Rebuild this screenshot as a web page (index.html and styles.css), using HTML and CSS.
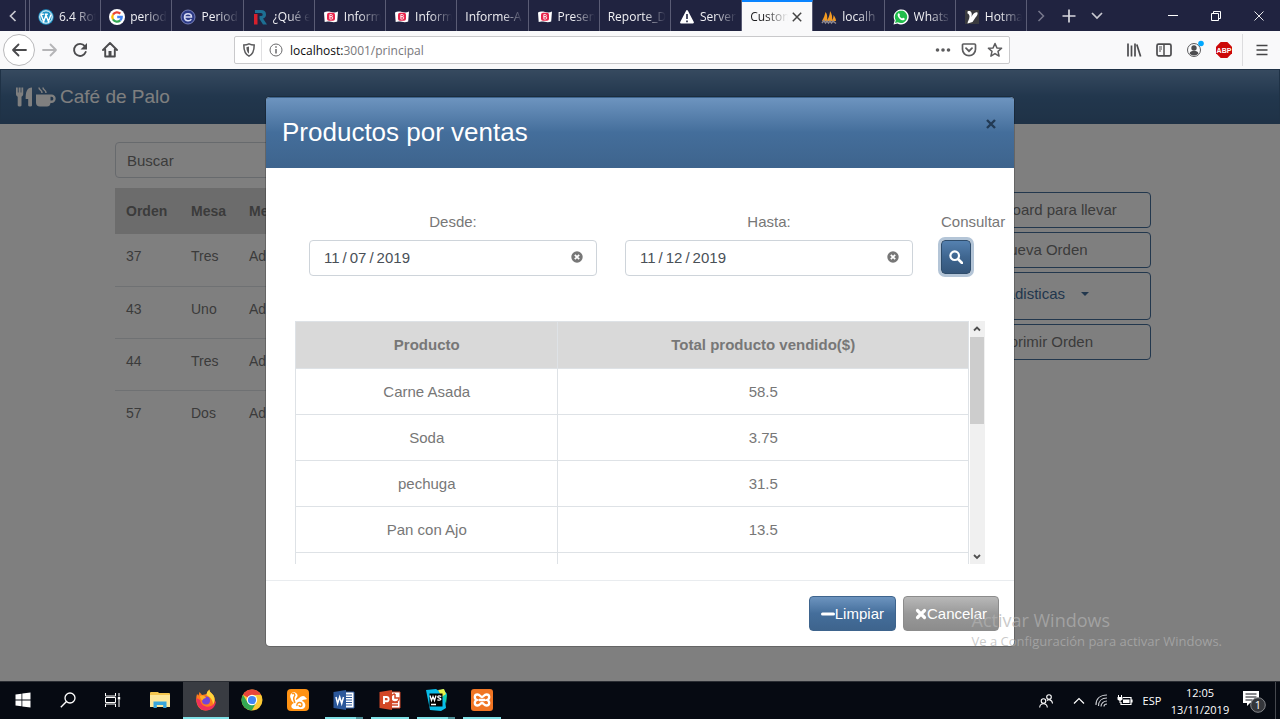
FILE: index.html
```html
<!DOCTYPE html>
<html lang="es">
<head>
<meta charset="utf-8">
<title>Customers</title>
<link rel="stylesheet" href="styles.css">
</head>
<body>
<svg class="defs" aria-hidden="true">
  <symbol id="bold-b" viewBox="0 0 16 16"><path d="M1 3.500c2-1.200 4-1.200 7-.5s5 .5 7-.6l-.8 10c-2 1-4 1-6.500.4s-4.500-.5-6 .2z" fill="#fff"/><rect x="4" y="3.800" width="8" height="8" rx="2" fill="#e8254b"/><path d="M6.800 5.500h1.500a1.100 1.100 0 010 2.200H6.800h1.700a1.200 1.200 0 010 2.400H6.800z" fill="none" stroke="#fff" stroke-width=".8"/></symbol>
  <symbol id="clear" viewBox="0 0 12 12"><circle cx="6" cy="6" r="5.700" fill="#777"/><path d="M3.800 3.800l4.400 4.400M8.200 3.800L3.800 8.200" stroke="#fff" stroke-width="1.700"/></symbol>
</svg>

<header class="tabbar">
  <button class="tab-scroll" aria-label="Anterior"><svg width="10" height="12" viewBox="0 0 10 12"><path d="M7.500 1L2.500 6l5 5" fill="none" stroke="#c8c8d0" stroke-width="1.700"/></svg></button>
  <nav class="tabs">
    <button class="tab"><svg class="fav" viewBox="0 0 16 16"><circle cx="8" cy="8" r="7.700" fill="#2196c9"/><circle cx="8" cy="8" r="6.200" fill="none" stroke="#fff" stroke-width="1"/><path d="M3 5.500l2.700 7L8 6l2.400 6.500L13 5.500M2.800 5.300h3M6.800 5.300h3" fill="none" stroke="#fff" stroke-width="1.400"/></svg><span class="tab-title">6.4 Rot</span></button>
    <button class="tab"><svg class="fav" viewBox="0 0 16 16"><circle cx="8" cy="8" r="8" fill="#fff"/><g fill="none" stroke-width="2.300"><path d="M11.300 4.600A4.700 4.700 0 004 5.600" stroke="#ea4335"/><path d="M4 5.600a4.700 4.700 0 000 4.800" stroke="#fbbc05"/><path d="M4 10.400a4.700 4.700 0 007.200 1" stroke="#34a853"/><path d="M11.200 11.400A4.500 4.500 0 0012.700 8H8.200" stroke="#4285f4"/></g></svg><span class="tab-title">period</span></button>
    <button class="tab"><svg class="fav" viewBox="0 0 16 16"><circle cx="8" cy="8" r="7" fill="#2c3a86" stroke="#8d96cc" stroke-width=".8"/><path d="M4.500 8h7c0-4.500-7-4.500-7 0s5.500 4.500 6.800 2.200" fill="none" stroke="#d6daf3" stroke-width="1.500"/></svg><span class="tab-title">Period</span></button>
    <button class="tab"><svg class="fav" viewBox="0 0 16 16"><path d="M3 1h6q5 0 5 4.500 0 3-3 4l4 6h-4L7.500 10V7H9q1.700 0 1.700-1.500T9 4H3z" fill="#1d6f93"/><path d="M2 5h3.500v10.500H2z" fill="#d6202c"/></svg><span class="tab-title">¿Qué e</span></button>
    <button class="tab"><svg class="fav"><use href="#bold-b"/></svg><span class="tab-title">Inform</span></button>
    <button class="tab"><svg class="fav"><use href="#bold-b"/></svg><span class="tab-title">Inform</span></button>
    <button class="tab"><span class="tab-title">Informe-A</span></button>
    <button class="tab"><svg class="fav"><use href="#bold-b"/></svg><span class="tab-title">Presen</span></button>
    <button class="tab"><span class="tab-title">Reporte_D</span></button>
    <button class="tab"><svg class="fav" viewBox="0 0 16 16"><path d="M8 2l6 11.500H2z" fill="#fff" stroke="#fff" stroke-width="1.800" stroke-linejoin="round"/><path d="M8 5v5M8 11.500v1.700" stroke="#202340" stroke-width="1.600"/></svg><span class="tab-title">Server</span></button>
    <button class="tab active"><span class="tab-title">Custon</span><svg class="tab-close" viewBox="0 0 10 10"><path d="M.8.800l8.400 8.400M9.200.800L.8 9.200" stroke="#444" stroke-width="1.500"/></svg></button>
    <button class="tab"><svg class="fav" viewBox="0 0 16 16"><path d="M1 12C3 9 4 5 4.500 3c2 2 2 6 1.500 8 2-2 3-7 3-9 2 3 2.500 6 2 9 1-1 1.500-3 1.500-5 1.500 2 2.500 4 2.500 6z" fill="#f39a22"/><path d="M1 14l2-2.500 1.500 2.500L6 12l1.500 2L9 12l1.500 2L12 12l3 2.500" fill="none" stroke="#8d8790" stroke-width="1.500"/></svg><span class="tab-title">localh</span></button>
    <button class="tab"><svg class="fav" viewBox="0 0 16 16"><path d="M.5 15.500l1.100-4A7.500 7.500 0 114.400 14.400z" fill="#fff"/><path d="M2 14l.8-2.800A6.200 6.200 0 114.900 13.200z" fill="#20bd4b"/><path d="M5.200 4.500c1-.8 1.300.2 1.800 1.400.1.400-.5.800-.6 1 .6 1.200 1.500 2 2.700 2.600.4-.2.700-.9 1.100-.8 1.200.5 1.800.8 1.500 1.500-.8 1.900-3.300 1.200-5.100-.5C4.700 7.900 4 5.700 5.200 4.500z" fill="#fff"/></svg><span class="tab-title">Whats</span></button>
    <button class="tab"><svg class="fav" viewBox="0 0 16 16"><path fill="#3a3b3f" d="M1 1h14v14H1z"/><path d="M3.500 2.500C7 1 8.500 4 7.500 8c1-3 3.500-5.500 6-4.500.5 1.500-.5 3.500-2 5L8.500 13l-5 1.500c0-2.500 2-4 2-7 0-1.500-1-3-2-3z" fill="#fff"/></svg><span class="tab-title">Hotma</span></button>
  </nav>
  <div class="window-controls">
    <button class="wc tight" aria-label="Siguiente"><svg width="10" height="12" viewBox="0 0 10 12"><path d="M2.500 1l5 5-5 5" fill="none" stroke="#77788c" stroke-width="1.500"/></svg></button>
    <button class="wc tight" aria-label="Nueva pestaña"><svg width="14" height="14" viewBox="0 0 14 14"><path d="M7 .500v13M.5 7h13" stroke="#d8d8de" stroke-width="1.700"/></svg></button>
    <button class="wc tight" aria-label="Lista de pestañas"><svg width="12" height="8" viewBox="0 0 12 8"><path d="M1 1l5 5 5-5" fill="none" stroke="#c8c8d0" stroke-width="1.700"/></svg></button>
    <span class="drag-space"></span>
    <button class="wc" aria-label="Minimizar"><svg width="10" height="10" viewBox="0 0 10 10"><path d="M0 4.500h10" stroke="#fff"/></svg></button>
    <button class="wc" aria-label="Restaurar"><svg width="10" height="10" viewBox="0 0 10 10"><path d="M.5 2.500h7v7h-7zM2.500 2.500v-2h7v7h-2" fill="none" stroke="#fff"/></svg></button>
    <button class="wc" aria-label="Cerrar"><svg width="10" height="10" viewBox="0 0 10 10"><path d="M.500.500l9 9M9.500.500l-9 9" stroke="#fff" stroke-width=".9"/></svg></button>
  </div>
</header>

<div class="toolbar">
  <div class="tool-group">
    <button class="tool back" aria-label="Atrás"><svg width="16" height="16" viewBox="0 0 16 16"><path d="M15 8H2M7.500 2.500L2 8l5.500 5.500" fill="none" stroke="#4a4a4c" stroke-width="1.800" stroke-linecap="round" stroke-linejoin="round"/></svg></button>
    <button class="tool" aria-label="Adelante"><svg width="16" height="16" viewBox="0 0 16 16"><path d="M1 8h13M8.500 2.500L14 8l-5.500 5.500" fill="none" stroke="#b5b5b7" stroke-width="1.800" stroke-linecap="round" stroke-linejoin="round"/></svg></button>
    <button class="tool" aria-label="Recargar"><svg width="16" height="16" viewBox="0 0 16 16"><path d="M12.800 4.200A6 6 0 1013.700 10" fill="none" stroke="#4c4c4e" stroke-width="1.900" stroke-linecap="round"/><path d="M15 1v6.500H8.500z" fill="#4c4c4e"/></svg></button>
    <button class="tool" aria-label="Inicio"><svg width="16" height="16" viewBox="0 0 16 16"><path d="M1 8l7-7 7 7M3.200 7.500v7h9.600v-7" fill="none" stroke="#4c4c4e" stroke-width="1.900" stroke-linecap="round" stroke-linejoin="round"/><path d="M6.500 14V9h3v5z" fill="#4c4c4e"/></svg></button>
  </div>
  <div class="urlbar">
    <span class="url-icon shield"><svg width="12" height="14" viewBox="0 0 12 14"><path d="M6 .8C8 1.800 9.500 2 11.200 2c0 5-.7 9-5.200 11.200C1.500 11 .8 7 .8 2 2.500 2 4 1.800 6 .8z" fill="none" stroke="#5c5c5e" stroke-width="1.500"/><path d="M6 3.500v7.200C4 9 3.500 7 3.400 4.200z" fill="#5c5c5e"/></svg></span>
    <span class="url-icon"><svg width="14" height="14" viewBox="0 0 14 14"><circle cx="7" cy="7" r="6" fill="none" stroke="#6a6a6c"/><path d="M7 6v4.500M7 3.200v1.500" stroke="#6a6a6c" stroke-width="1.500"/></svg></span>
    <a class="url" href="#"><span class="url-host">localhost:</span>3001/principal</a>
    <button class="url-btn" aria-label="Acciones"><svg width="16" height="4" viewBox="0 0 16 4"><g fill="#5c5c5e"><circle cx="2.500" cy="2" r="1.800"/><circle cx="8" cy="2" r="1.800"/><circle cx="13.500" cy="2" r="1.800"/></g></svg></button>
    <button class="url-btn" aria-label="Pocket"><svg width="16" height="14" viewBox="0 0 16 14"><path d="M2.500 1h11q1 0 1 1v4.200a6.500 6.500 0 01-13 0V2q0-1 1-1z" fill="none" stroke="#5c5c5e" stroke-width="1.700"/><path d="M5 5.200l3 3 3-3" fill="none" stroke="#5c5c5e" stroke-width="1.800" stroke-linecap="round"/></svg></button>
    <button class="url-btn" aria-label="Marcador"><svg width="16" height="16" viewBox="0 0 16 16"><path d="M8 1.500l1.900 4.400 4.700.4-3.600 3.100 1.100 4.700L8 11.600l-4.100 2.500L5 9.400 1.400 6.300l4.700-.4z" fill="none" stroke="#5c5c5e" stroke-width="1.500" stroke-linejoin="round"/></svg></button>
  </div>
  <div class="tool-group">
    <button class="tool" aria-label="Biblioteca"><svg width="16" height="14" viewBox="0 0 16 14"><path d="M2 .500v13M5.500 2.500v11M9 .500v13M10.800 1.500l3.800 12" stroke="#4c4c4e" stroke-width="1.700"/></svg></button>
    <button class="tool" aria-label="Barra lateral"><svg width="16" height="14" viewBox="0 0 16 14"><rect x="1" y="1.200" width="14" height="11.600" rx="1.500" fill="none" stroke="#4c4c4e" stroke-width="1.700"/><path d="M8 1v12" stroke="#4c4c4e" stroke-width="1.500"/><path d="M3 4h3M3 6h3M3 8h2" stroke="#4c4c4e"/></svg></button>
    <button class="tool" aria-label="Cuenta"><svg width="20" height="20" viewBox="0 0 20 20"><circle cx="10" cy="10" r="6.500" fill="none" stroke="#5c5c5e"/><circle cx="10" cy="8" r="2.700" fill="#4c4c4e"/><path d="M5.500 13.500c.5-2 2-2.500 4.500-2.500s4 .5 4.500 2.500a6 6 0 01-9 0z" fill="#4c4c4e"/><circle cx="17" cy="3.500" r="2.800" fill="#00a8ff"/></svg></button>
    <button class="tool abp" aria-label="Adblock Plus"><svg width="16" height="16" viewBox="0 0 16 16"><path d="M4.700 0h6.600L16 4.700v6.600L11.300 16H4.700L0 11.300V4.700z" fill="#cc0808"/><text x="8" y="10.500" text-anchor="middle" font-size="7" font-weight="bold" fill="#fff">ABP</text></svg></button>
    <button class="tool menu" aria-label="Menú"><svg width="12" height="12" viewBox="0 0 12 12"><path d="M.5 1.500h11M.5 6h11M.5 10.500h11" stroke="#444446" stroke-width="1.700"/></svg></button>
  </div>
</div>

<main class="viewport">
  <header class="navbar">
    <a class="brand" href="#">
      <svg width="17" height="20" viewBox="0 0 17 20" fill="currentColor"><path d="M0 .500h1.800v5h.8V.500h2v5h.8V.500H7.200V7c0 1.600-.9 2.300-1.700 2.700v8.800q0 1-1.900 1t-1.900-1V9.700C.9 9.300 0 8.600 0 7zM16 .500v18q0 1-1.900 1t-1.900-1V12H9.700C9.500 5 11 .500 16 .500z"/></svg>
      <svg width="21" height="20" viewBox="0 0 21 20" fill="currentColor"><path d="M0 7.500h15.500a4.200 4.200 0 010 8.400H14.500q-.5 3.500-3.500 3.500H4q-4 0-4-4zM14.500 9.800v3.800h1a1.900 1.900 0 000-3.800z" fill-rule="evenodd"/><path d="M3 .500c0 3 3 2 3 5.500M7 .500c0 3 3 2 3 5.500" fill="none" stroke="currentColor" stroke-width="1.500"/></svg>
      <span>Café de Palo</span>
    </a>
  </header>
  <div class="container">
    <section class="orders">
      <input class="control" type="text" placeholder="Buscar" aria-label="Buscar">
      <table class="order-table">
        <thead><tr><th class="c-order">Orden</th><th class="c-mesa">Mesa</th><th>Mesero</th></tr></thead>
        <tbody>
          <tr><td>37</td><td>Tres</td><td>Admin</td></tr>
          <tr><td>43</td><td>Uno</td><td>Admin</td></tr>
          <tr><td>44</td><td>Tres</td><td>Admin</td></tr>
          <tr><td>57</td><td>Dos</td><td>Admin</td></tr>
        </tbody>
      </table>
    </section>
    <aside class="actions">
      <button class="outline">Dashboard para llevar</button>
      <button class="outline">Nueva Orden</button>
      <button class="outline dropdown">Estadisticas<span class="caret"></span></button>
      <button class="outline">Imprimir Orden</button>
    </aside>
  </div>

  <div class="backdrop">
    <div class="modal" role="dialog" aria-labelledby="modal-title">
      <div class="modal-header">
        <h1 class="modal-title" id="modal-title">Productos por ventas</h1>
        <button class="modal-close" aria-label="Cerrar"><svg width="10" height="10" viewBox="0 0 10 10"><path d="M1 1l8 8M9 1L1 9" stroke="#223a54" stroke-width="2.400"/></svg></button>
      </div>
      <div class="modal-body">
        <form class="filters">
          <div class="field">
            <label for="desde">Desde:</label>
            <div class="date-box"><input class="control date" id="desde" type="date" value="2019-11-07"><button class="clear" type="button" aria-label="Borrar"><svg width="12" height="12"><use href="#clear"/></svg></button></div>
          </div>
          <div class="field">
            <label for="hasta">Hasta:</label>
            <div class="date-box"><input class="control date" id="hasta" type="date" value="2019-11-12"><button class="clear" type="button" aria-label="Borrar"><svg width="12" height="12"><use href="#clear"/></svg></button></div>
          </div>
          <div class="field query">
            <label for="consultar">Consultar</label>
            <button class="search" id="consultar" type="button"><svg width="14" height="14" viewBox="0 0 14 14"><circle cx="5.700" cy="5.700" r="4.300" fill="none" stroke="#fff" stroke-width="2.200"/><path d="M9 9l4 4" stroke="#fff" stroke-width="2.600" stroke-linecap="round"/></svg></button>
          </div>
        </form>
        <div class="scroll-area">
          <div class="scroll-content">
            <table class="sales">
              <thead><tr><th class="c-product">Producto</th><th>Total producto vendido($)</th></tr></thead>
              <tbody>
                <tr><td>Carne Asada</td><td>58.5</td></tr>
                <tr><td>Soda</td><td>3.75</td></tr>
                <tr><td>pechuga</td><td>31.5</td></tr>
                <tr><td>Pan con Ajo</td><td>13.5</td></tr>
                <tr><td></td><td></td></tr>
              </tbody>
            </table>
          </div>
          <div class="scrollbar">
            <svg width="14" height="16" viewBox="0 0 14 16"><path d="M4 9.500l3-3 3 3" fill="none" stroke="#505050" stroke-width="1.800"/></svg>
            <span class="thumb"></span>
            <svg class="down" width="14" height="16" viewBox="0 0 14 16"><path d="M4 7l3 3 3-3" fill="none" stroke="#505050" stroke-width="1.800"/></svg>
          </div>
        </div>
      </div>
      <div class="modal-footer">
        <button class="btn primary"><svg width="14" height="14" viewBox="0 0 14 14"><path d="M1.500 7h11" stroke="#fff" stroke-width="3" stroke-linecap="round"/></svg>Limpiar</button>
        <button class="btn secondary"><svg width="12" height="14" viewBox="0 0 12 14"><path d="M2.500 3.500l7 7M9.500 3.500l-7 7" stroke="#fff" stroke-width="3.200" stroke-linecap="round"/></svg>Cancelar</button>
      </div>
    </div>
  </div>
  <div class="watermark"><p class="wm-title">Activar Windows</p><p class="wm-text">Ve a Configuración para activar Windows.</p></div>
</main>

<footer class="taskbar">
  <div class="launchers">
    <button class="launch sys" aria-label="Inicio"><svg width="16" height="16" viewBox="0 0 16 16" fill="#fff"><path d="M.5 2.500l6-.8v5.900h-6zM7.300 1.600l8.200-1.100v7.100H7.300zM.5 8.400h6v5.900l-6-.8zM7.300 8.400h8.200v7.100l-8.200-1.100z"/></svg></button>
    <button class="launch sys" aria-label="Buscar"><svg width="16" height="16" viewBox="0 0 16 16"><circle cx="10" cy="6" r="5" fill="none" stroke="#fff" stroke-width="1.300"/><path d="M6.500 9.500L.8 15.200" stroke="#fff" stroke-width="1.400"/></svg></button>
    <button class="launch sys" aria-label="Vista de tareas"><svg width="16" height="16" viewBox="0 0 16 16"><path d="M.5 1v3h10V1M.5 15v-3h10v3M.5 5.500v5h10v-5zM14 1v3.500M14 8v7" fill="none" stroke="#fff"/><path d="M12.800 5h2.400v2.600h-2.400z" fill="#fff"/></svg></button>
    <button class="launch first" aria-label="Explorador"><svg width="22" height="20" viewBox="0 0 22 20"><path d="M1 3q0-1 1-1h7l1 1h10q1 0 1 1v13H1z" fill="#f4c64e"/><path d="M1 5h20v12H1z" fill="#fde79a"/><path d="M4.500 18v-6.500h13V18h-3.300v-3H7.800v3z" fill="#37a5dc"/></svg></button>
    <button class="launch current" aria-label="Firefox"><svg width="22" height="22" viewBox="0 0 22 22"><path d="M2 5l1.500 1.500L4.500 3l2.500 3q3-.5 4.500-1Q12 2 14.500.500c0 3 2 3 4 6 4 7-1 15-8 15C3 21.500-.5 13 2 5z" fill="#ff7a1c"/><path d="M1.500 9C1 17 6 21.500 11 21.500c6 0 10-4 10-10-2 5-6 7-10 6S6 14 5 11z" fill="#f02f5c"/><path d="M14.500.500c0 3 2 3 4 6 1.500 3 1.500 6-.5 9 0-4-2-7-6.500-9.500Q12 2 14.500.500z" fill="#ffd53c"/><circle cx="11" cy="11.500" r="4" fill="#7544d8"/><path d="M5 7c3-1 5 0 6 2-2 0-3 1-3.500 2.500C6 11 5 9 5 7z" fill="#ffae25"/></svg></button>
    <button class="launch" aria-label="Chrome"><svg width="22" height="22" viewBox="0 0 22 22"><circle cx="11" cy="11" r="10.500" fill="#fcc934"/><path d="M11 11L1.900 5.800A10.500 10.500 0 0120.100 5.800L11 6z" fill="#e8453c"/><path d="M1.900 5.800A10.500 10.500 0 0010.800 21.500l4.500-8-8.600.1z" fill="#34a853"/><circle cx="11" cy="11" r="5.200" fill="#fff"/><circle cx="11" cy="11" r="4.100" fill="#4285f4"/></svg></button>
    <button class="launch" aria-label="UC Browser"><svg width="22" height="22" viewBox="0 0 22 22"><rect width="22" height="22" rx="4" fill="#ff9213"/><path d="M4 10c-3-5 3-9 6-5 2 3-2 4-1 6 3-1 4-4 7-4 2 0 3 2 4 3-2 1-4 0-5 2 4 1 5 7 0 8H7c-4-1-3-5 0-6-1-1-3-2-3-4z" fill="#fff"/><path d="M5 5c2-2 4 1 2 3-1 2 0 4 1 6M10 17c-1-4 5-5 5-1 0 2-3 2-3 0" fill="none" stroke="#ff9213" stroke-width="1.400"/></svg></button>
    <button class="launch open stacked" aria-label="Word"><svg width="22" height="22" viewBox="0 0 22 22"><path d="M11 3h10v16H11z" fill="#fff" stroke="#2b579a"/><path d="M13 6h6M13 8.500h6M13 11h6M13 13.500h6M13 16h6" stroke="#2b579a"/><path d="M.5 3L13 1v20L.5 19z" fill="#2b579a"/><path d="M3 8l1.600 6.500L6.700 8l2 6.500L10.500 8" fill="none" stroke="#fff" stroke-width="1.500"/></svg></button>
    <button class="launch open" aria-label="PowerPoint"><svg width="22" height="22" viewBox="0 0 22 22"><path d="M11 3h10v16H11z" fill="#fff" stroke="#d24726"/><path d="M16 5v4h4a4 4 0 11-4-4M13 13.500h6M13 16h6" fill="none" stroke="#d24726" stroke-width="1.500"/><path d="M.5 3L13 1v20L.5 19z" fill="#d24726"/><path d="M5 15V8h2.500a2 2 0 010 4.300H5" fill="none" stroke="#fff" stroke-width="1.900"/></svg></button>
    <button class="launch open stacked" aria-label="WebStorm"><svg width="22" height="22" viewBox="0 0 22 22"><path d="M1 1l10-1 3 2 4-2 4 5-2 6 1 8-5 3-11-1z" fill="#08bde9"/><path d="M13 1l6-1 2 5-4 3z" fill="#e7f34a"/><path d="M18 7l4-1-1 9z" fill="#12d4a5"/><path d="M4.500 4.500h13v13h-13z"/><path d="M5 6.500l1.500 5L8 7.500l1.500 4L11 6.500M16.300 7.300c-4-1.500-4.500 1.300-2 1.800s2 2.700-2 1.700M6 15.500h5" fill="none" stroke="#fff" stroke-width="1.300"/></svg></button>
    <button class="launch open" aria-label="XAMPP"><svg width="22" height="22" viewBox="0 0 22 22"><rect width="22" height="22" rx="3" fill="#f07523"/><path d="M11 8C9.500 8 9 5.500 6.500 5.500c-3.500 0-3.500 4.500-.5 5.500-3 1-3 5.500.5 5.500C9 16.500 9.500 14 11 14s2 2.500 4.500 2.500c3.500 0 3.500-4.500.5-5.500 3-1 3-5.500-.5-5.500C13 5.500 12.500 8 11 8zM8 11h6" fill="none" stroke="#fff" stroke-width="2.300"/></svg></button>
  </div>
  <div class="tray">
    <button class="tray-icon people" aria-label="Contactos"><svg width="14" height="14" viewBox="0 0 14 14" fill="none" stroke="#fff" stroke-width="1.100"><circle cx="4.500" cy="7" r="2.300"/><circle cx="10" cy="3" r="2.300"/><path d="M.700 13.500c0-5 7.600-5 7.600 0M8 6.500c2-1.500 5.300-.5 5.500 3"/></svg></button>
    <button class="tray-icon" aria-label="Mostrar iconos"><svg width="12" height="8" viewBox="0 0 12 8"><path d="M1 6.500l5-5 5 5" fill="none" stroke="#fff" stroke-width="1.200"/></svg></button>
    <button class="tray-icon" aria-label="Red"><svg width="13" height="13" viewBox="0 0 13 13" fill="none" stroke="#c9cbd0" stroke-width="1.200"><path d="M1 11C1 5 5 1 12 1M3.500 12C3.500 7.500 6.500 4 12 4M6 12.500C6 9.500 8.500 7 12 7M9 12.500C9 11 10 10 12 10"/></svg></button>
    <button class="tray-icon" aria-label="Batería"><svg width="16" height="12" viewBox="0 0 16 12"><path d="M6 2.500h8v7H4V7M15 4.500v3" fill="none" stroke="#fff" stroke-width="1.200"/><path d="M6 4.500h6.500v3.500H6zM.5 2h5v2.500q-2.500 2.500-5 0z" fill="#fff"/><path d="M1.500 0v2M4.500 0v2M3 5v3" stroke="#fff"/></svg></button>
    <button class="lang">ESP</button>
    <button class="clock"><span>12:05</span><span>13/11/2019</span></button>
    <button class="notify" aria-label="Notificaciones"><svg width="24" height="24" viewBox="0 0 24 24"><path d="M1 2h16v12H8l-3 3v-3H1z" fill="#fff"/><path d="M3.500 5h11M3.500 8h11M3.500 11h7" stroke="#10131a"/><circle cx="16" cy="16" r="7.300" fill="#34363b" stroke="#85878b"/><text x="16" y="20" text-anchor="middle" font-size="11" fill="#fff">1</text></svg></button>
  </div>
</footer>
</body>
</html>
```
FILE: styles.css
```css
* { box-sizing: border-box; }
html, body { margin: 0; }
body {
  display: flex;
  flex-direction: column;
  min-height: 100vh;
  overflow-x: hidden;
  font-family: "Liberation Sans", Arial, sans-serif;
  font-size: 15px;
  line-height: 22px;
  color: #777;
}
button, input { font: inherit; color: inherit; }
button { padding: 0; border: 0; background: none; }
svg { display: block; flex: none; }
.defs { position: absolute; width: 0; height: 0; }

/* Browser window */
.tabbar, .toolbar, .taskbar, .watermark { font-family: "Open Sans", "Noto Sans", sans-serif; }
.tabbar {
  display: flex;
  height: 31px;
  background: #202340;
  color: #f0f0f4;
  font-size: 12px;
  line-height: 18px;
}
.tab-scroll {
  display: grid;
  place-items: center;
  width: 26px;
  margin-right: 3px;
  border-right: 1px solid #5a5c75;
}
.tabs {
  display: grid;
  flex: 1;
  grid-auto-columns: minmax(0, 1fr);
  grid-auto-flow: column;
  min-width: 0;
  border-left: 1px solid #5a5c75;
}
.tab {
  display: flex;
  align-items: center;
  gap: 5px;
  padding: 2px 2px 0 8px;
  border-right: 1px solid #5a5c75;
  text-align: left;
}
.fav { width: 16px; height: 16px; }
.tab-title {
  flex: 1;
  min-width: 0;
  overflow: hidden;
  white-space: nowrap;
  mask-image: linear-gradient(to right, #000 calc(100% - 24px), transparent calc(100% - 2px));
}
.tab.active {
  gap: 2px;
  padding: 0 10px 0 8px;
  border-top: 2px solid #0a84ff;
  background: #f9f9fa;
  color: #1c1c1e;
}
.tab-close { width: 10px; height: 10px; }
.window-controls { display: flex; width: 253px; }
.wc { display: grid; place-items: center; width: 43px; }
.wc.tight { width: 28px; }
.drag-space { flex: 1; }

.toolbar {
  display: flex;
  align-items: center;
  justify-content: space-between;
  gap: 109px;
  height: 38px;
  padding: 0 3px;
  background: #f9f9fa;
}
.tool-group { display: flex; align-items: center; }
.tool { display: grid; place-items: center; width: 30px; height: 32px; }
.tool.back { width: 32px; border: 1px solid #b9b9bb; border-radius: 50%; background: #fff; }
.abp { font-family: "Liberation Sans", Arial, sans-serif; }
.tool.menu { width: 35px; margin-left: 3px; border-left: 1px solid #dcdcde; padding-left: 4px; }
.urlbar {
  display: flex;
  flex: 1;
  align-items: center;
  height: 28px;
  padding: 0 1px 0 2px;
  border: 1px solid #c9c9cb;
  border-radius: 2px;
  background: #fff;
}
.url-icon { display: grid; place-items: center; width: 27px; height: 22px; }
.url-icon.shield { width: 25px; border-right: 1px solid #e0e0e2; }
.url {
  flex: 1;
  overflow: hidden;
  padding: 1px 0 0 1px;
  color: #77777a;
  font-size: 12px;
  text-decoration: none;
  white-space: nowrap;
}
.url-host { color: #0c0c0d; }
.url-btn { display: grid; place-items: center; width: 26px; height: 26px; }

/* Page */
.viewport { position: relative; flex: 1; background: #fff; }
.navbar {
  display: flex;
  align-items: center;
  height: 55px;
  padding: 0 15px;
  border: 1px solid #3e648d;
  background: linear-gradient(#6d94bf, #446e9b 50%, #3e648d);
}
.brand {
  display: flex;
  align-items: center;
  gap: 3px;
  color: #fff;
  font-size: 19px;
  text-decoration: none;
}
.container {
  display: flex;
  justify-content: space-between;
  gap: 30px;
  padding: 18px 129px 0 115px;
}
.orders { flex: 1; max-width: 780px; }
.control {
  display: block;
  width: 100%;
  height: 36px;
  padding: 0 11px;
  border: 1px solid #ced4da;
  border-radius: 4px;
  background: #fff;
}
.control::placeholder { color: #777; opacity: 1; }
.order-table {
  width: 100%;
  margin-top: 10px;
  border-collapse: collapse;
  font-size: 14px;
  text-align: left;
}
.order-table th { height: 46px; padding: 0 11px; background: #d9d9d9; }
.order-table td { height: 52px; padding: 11px 11px 0; border-bottom: 1px solid #dee2e6; vertical-align: top; }
.order-table tr:last-child td { border-bottom: 0; }
.order-table .c-order { width: 65px; }
.order-table .c-mesa { width: 58px; }
.actions { display: flex; flex-direction: column; gap: 4px; width: 216px; padding-top: 50px; }
.outline {
  height: 36px;
  border: 1px solid #446e9b;
  border-radius: 4px;
  background: #fff;
}
.outline.dropdown {
  display: flex;
  align-items: center;
  justify-content: center;
  gap: 16px;
  height: 48px;
  padding: 0 12px 4px 0;
  color: #446e9b;
}
.caret { border: 4px solid transparent; border-top-color: #446e9b; border-bottom: 0; }

/* Dialog */
.backdrop {
  position: absolute;
  inset: 0;
  padding: 28px 16px;
  background: rgba(0, 0, 0, 0.5);
}
.modal {
  max-width: 748px;
  margin: 0 auto;
  border-radius: 4px;
  background: #fff;
  box-shadow: 0 0 0 1px rgba(0, 0, 0, 0.2);
}
.modal-header {
  display: flex;
  align-items: flex-start;
  justify-content: space-between;
  padding: 16px;
  border: 1px solid #3e648d;
  border-width: 1px 0;
  border-radius: 4px 4px 0 0;
  background: linear-gradient(#6d94bf, #446e9b 50%, #3e648d);
}
.modal-title {
  margin: 0;
  color: #fff;
  font-size: 26px;
  font-weight: 400;
  line-height: 37px;
}
.modal-close { display: grid; place-items: center; width: 14px; height: 20px; }
.modal-body { padding: 43px 29px 16px; }
.filters {
  display: grid;
  grid-template-columns: 1fr 1fr 44px;
  gap: 28px;
  padding-left: 14px;
  text-align: center;
}
.field { display: flex; flex-direction: column; gap: 7px; }
.date-box { position: relative; }
.control.date { padding: 0 13px; color: #495057; }
.date::-webkit-calendar-picker-indicator { display: none; }
.date::-webkit-datetime-edit-text { padding: 0 2px; }
.clear { position: absolute; top: 11px; right: 14px; }
.query { align-items: flex-start; white-space: nowrap; }
.search {
  display: grid;
  place-items: center;
  width: 30px;
  height: 34px;
  border: 1px solid #2f4d6c;
  border-radius: 4px;
  background: linear-gradient(#5581b0, #3f6690 50%, #35567a);
  box-shadow: 0 0 0 3px #b4c5d7;
}
.scroll-area { display: flex; gap: 1px; height: 243px; margin-top: 45px; }
.scroll-content { flex: 1; overflow: hidden; }
.sales { width: 100%; border-collapse: collapse; text-align: center; }
.sales th, .sales td { height: 46px; padding: 0; border: 1px solid #dee2e6; }
.sales th { height: 47px; background: #d9d9d9; }
.sales .c-product { width: 39%; }
.scrollbar { display: flex; flex-direction: column; width: 15px; background: #f0f0f0; }
.thumb { height: 87px; margin-right: 1px; background: #cdcdcd; }
.scrollbar .down { margin-top: auto; }
.modal-footer {
  display: flex;
  justify-content: flex-end;
  gap: 7px;
  padding: 15px;
  border-top: 1px solid #e9ecef;
}
.btn {
  display: flex;
  align-items: center;
  height: 35px;
  padding: 0 11px;
  border: 1px solid;
  border-radius: 4px;
  color: #fff;
}
.btn.primary { border-color: #3e648d; background: linear-gradient(#6d94bf, #446e9b 50%, #3e648d); }
.btn.secondary { border-color: #8c8c8c; background: linear-gradient(#b8b8b8, #999 50%, #8c8c8c); }
.watermark {
  position: absolute;
  right: 58px;
  bottom: 31px;
  color: rgba(178, 178, 178, 0.7);
  pointer-events: none;
}
.wm-title, .wm-text { margin: 0; white-space: nowrap; }
.wm-title { font-size: 18px; line-height: 24px; }
.wm-text { font-size: 13px; line-height: 18px; }

/* Taskbar */
.taskbar {
  display: flex;
  justify-content: space-between;
  height: 38px;
  border-top: 1px solid #2a2d33;
  background: #060a12;
  color: #fff;
  font-size: 11px;
  line-height: 17px;
}
.launchers, .tray { display: flex; }
.launch {
  display: grid;
  place-items: center;
  width: 46px;
  border-bottom: 2px solid transparent;
}
.launch.sys { width: 45px; }
.launch.first { margin-left: 2px; }
.launch.current { background: #393c42; border-bottom-color: #7fe0e6; }
.launch.open {
  width: 38px;
  margin: 0 4px;
  border-bottom-color: #7fe0e6;
}
.launch.stacked { border-image: linear-gradient(to right, #7fe0e6 78%, #4f9299 78%) 2; border-width: 0 0 2px; }
.tray { align-items: center; }
.tray-icon { display: grid; place-items: center; width: 23px; height: 36px; }
.tray-icon.people { margin-right: 10px; }
.lang { width: 32px; font-size: 11px; }
.clock { display: flex; flex-direction: column; align-items: center; width: 64px; }
.notify {
  display: grid;
  place-items: center;
  width: 44px;
  height: 37px;
  margin-right: 4px;
  border-right: 1px solid #45484e;
}
```
